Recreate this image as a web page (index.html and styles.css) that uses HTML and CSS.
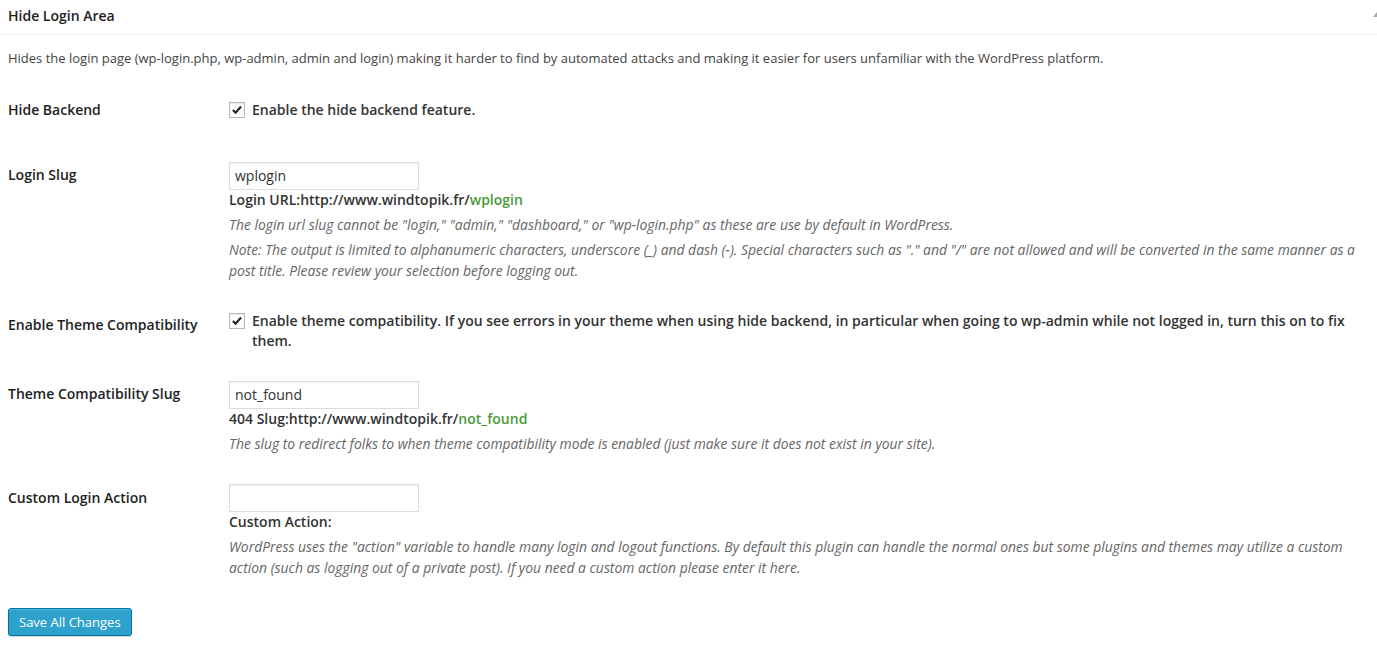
FILE: index.html
```html
<!DOCTYPE html>
<html>
<head>
<meta charset="utf-8">
<link rel="stylesheet" href="styles.css">
</head>
<body>
<div class="page">
  <div class="box-head">
    <h3 class="box-title">Hide Login Area</h3>
    <span class="handle"></span>
  </div>
  <p class="intro">Hides the login page (wp-login.php, wp-admin, admin and login) making it harder to find by automated attacks and making it easier for users unfamiliar with the WordPress platform.</p>

  <div class="row row-1">
    <div class="label l15">Hide Backend</div>
    <div class="field pb27">
      <label class="check"><span class="cb"><svg viewBox="0 0 16 16" width="14" height="14"><path d="M3.3 8 L6.4 11.2 L12.6 4" fill="none" stroke="#222" stroke-width="2.4"/></svg></span><span>Enable the hide backend feature.</span></label>
    </div>
  </div>

  <div class="row">
    <div class="label l18">Login Slug</div>
    <div class="field">
      <div class="input">wplogin</div>
      <div class="url">Login URL:http://www.windtopik.fr/<span class="slug">wplogin</span></div>
      <p class="desc">The login url slug cannot be "login," "admin," "dashboard," or "wp-login.php" as these are use by default in WordPress.</p>
      <p class="desc">Note: The output is limited to alphanumeric characters, underscore (_) and dash (-). Special characters such as "." and "/" are not allowed and will be converted in the same manner as a post title. Please review your selection before logging out.</p>
    </div>
  </div>

  <div class="row">
    <div class="label l19">Enable Theme Compatibility</div>
    <div class="field">
      <label class="check"><span class="cb"><svg viewBox="0 0 16 16" width="14" height="14"><path d="M3.3 8 L6.4 11.2 L12.6 4" fill="none" stroke="#222" stroke-width="2.4"/></svg></span><span>Enable theme compatibility. If you see errors in your theme when using hide backend, in particular when going to wp-admin while not logged in, turn this on to fix them.</span></label>
    </div>
  </div>

  <div class="row">
    <div class="label l18">Theme Compatibility Slug</div>
    <div class="field">
      <div class="input">not_found</div>
      <div class="url">404 Slug:http://www.windtopik.fr/<span class="slug">not_found</span></div>
      <p class="desc">The slug to redirect folks to when theme compatibility mode is enabled (just make sure it does not exist in your site).</p>
    </div>
  </div>

  <div class="row">
    <div class="label l19">Custom Login Action</div>
    <div class="field">
      <div class="input"></div>
      <div class="url">Custom Action:</div>
      <p class="desc">WordPress uses the "action" variable to handle many login and logout functions. By default this plugin can handle the normal ones but some plugins and themes may utilize a custom action (such as logging out of a private post). If you need a custom action please enter it here.</p>
    </div>
  </div>

  <div class="actions">
    <button class="btn">Save All Changes</button>
  </div>
</div>
</body>
</html>
```
FILE: styles.css
```css
html, body {
  margin: 0;
  padding: 0;
  background: #fff;
  overflow: hidden;
}
body {
  font-family: "Open Sans", "Liberation Sans", sans-serif;
  color: #444;
  width: 1377px;
  height: 645px;
}
.page {
  width: 1377px;
}
.box-head {
  display: flex;
  justify-content: space-between;
  align-items: center;
  height: 35px;
  border-bottom: 1px solid #eee;
  padding-left: 8px;
  box-sizing: border-box;
}
.box-title {
  margin: 0;
  font-size: 14px;
  font-weight: 600;
  color: #222;
  line-height: 20px;
  padding-bottom: 2px;
}
.handle {
  width: 0;
  height: 0;
  border-left: 4px solid transparent;
  border-right: 4px solid transparent;
  border-bottom: 5px solid #aaa;
  margin-right: -4px;
  margin-bottom: 6px;
}
.intro {
  margin: 13px 0 0 8px;
  font-size: 13px;
  line-height: 20px;
  color: #444;
}
.row {
  display: flex;
}
.row-1 {
  margin-top: 17px;
}
.label {
  width: 229px;
  padding-left: 8px;
  box-sizing: border-box;
  font-size: 14px;
  font-weight: 600;
  color: #222;
  line-height: 20px;
  flex-shrink: 0;
}
.l15 { padding-top: 15px; }
.l18 { padding-top: 18px; }
.l19 { padding-top: 19px; }
.field {
  width: 1138px;
  padding: 15px 0 15px 0;
  font-size: 14px;
  line-height: 20px;
}
.pb27 { padding-bottom: 27px; }
.check {
  display: flex;
  align-items: flex-start;
  font-weight: 600;
  color: #333;
}
.cb {
  width: 14px;
  height: 14px;
  border: 1px solid #b4b9be;
  background: #fff;
  box-shadow: inset 0 1px 2px rgba(0,0,0,.1);
  flex-shrink: 0;
  margin: 2px 7px 0 0;
  display: flex;
  align-items: center;
  justify-content: center;
}
.input {
  width: 190px;
  height: 28px;
  box-sizing: border-box;
  border: 1px solid #ddd;
  box-shadow: inset 0 1px 2px rgba(0,0,0,.07);
  padding: 0 5px;
  font-size: 14px;
  line-height: 26px;
  color: #333;
}
.url {
  font-weight: 600;
  color: #333;
  line-height: 20px;
}
.slug {
  color: #4a9a3a;
}
.desc {
  margin: 4px 0 0 0;
  font-family: "Open Sans", "Noto Sans", sans-serif;
  font-size: 13.9px;
  font-style: italic;
  color: #666;
  line-height: 21px;
}
.actions {
  padding: 15px 0 0 8px;
}
.btn {
  height: 28px;
  box-sizing: border-box;
  background: #2ea2cc;
  border: 1px solid #0074a2;
  border-radius: 3px;
  box-shadow: inset 0 1px 0 rgba(120,200,230,.5), 0 1px 0 rgba(0,0,0,.15);
  color: #fff;
  font-family: "Open Sans", "Liberation Sans", sans-serif;
  font-size: 13px;
  line-height: 26px;
  padding: 0 10px;
  white-space: nowrap;
  cursor: pointer;
}
```
